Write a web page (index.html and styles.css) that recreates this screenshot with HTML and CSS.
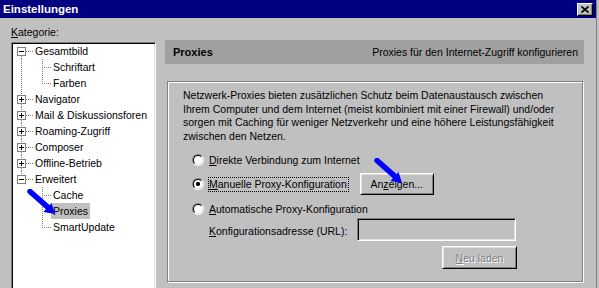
FILE: index.html
```html
<!DOCTYPE html>
<html lang="de">
<head>
  <meta charset="UTF-8">
  <title>Einstellungen</title>
  <link rel="stylesheet" href="styles.css">
</head>
<body>
  <div class="window">
    <div class="titlebar">
      <span class="title">Einstellungen</span>
      <span class="close">
        <svg width="8" height="7" viewBox="0 0 8 7"><path d="M0.5 0.5L7.5 6.5M7.5 0.5L0.5 6.5" stroke="#000" stroke-width="1.6"/></svg>
      </span>
    </div>

    <div class="content">
      <div class="left">
        <div class="cat-label"><u>K</u>ategorie:</div>
        <div class="tree">
          <div class="row"><span class="g g0 exp first"><span class="box"></span></span><span class="lbl">Gesamtbild</span></div>
          <div class="row"><span class="g g0 pipe"></span><span class="g g1 tee"></span><span class="lbl">Schriftart</span></div>
          <div class="row"><span class="g g0 pipe"></span><span class="g g1 elbow"></span><span class="lbl">Farben</span></div>
          <div class="row"><span class="g g0 exp"><span class="box plus"></span></span><span class="lbl">Navigator</span></div>
          <div class="row"><span class="g g0 exp"><span class="box plus"></span></span><span class="lbl">Mail &amp; Diskussionsforen</span></div>
          <div class="row"><span class="g g0 exp"><span class="box plus"></span></span><span class="lbl">Roaming-Zugriff</span></div>
          <div class="row"><span class="g g0 exp"><span class="box plus"></span></span><span class="lbl">Composer</span></div>
          <div class="row"><span class="g g0 exp"><span class="box plus"></span></span><span class="lbl">Offline-Betrieb</span></div>
          <div class="row"><span class="g g0 exp last"><span class="box"></span></span><span class="lbl">Erweitert</span></div>
          <div class="row"><span class="g g0"></span><span class="g g1 tee"></span><span class="lbl">Cache</span></div>
          <div class="row"><span class="g g0"></span><span class="g g1 tee"></span><span class="lbl selected">Proxies</span></div>
          <div class="row"><span class="g g0"></span><span class="g g1 elbow"></span><span class="lbl">SmartUpdate</span></div>
        </div>
      </div>

      <div class="right">
        <div class="header">
          <b>Proxies</b>
          <span>Proxies für den Internet-Zugriff konfigurieren</span>
        </div>

        <div class="group">
          <p class="desc">
            Netzwerk-Proxies bieten zusätzlichen Schutz beim Datenaustausch zwischen<br>
            Ihrem Computer und dem Internet (meist kombiniert mit einer Firewall) und/oder<br>
            sorgen mit Caching für weniger Netzverkehr und eine höhere Leistungsfähigkeit<br>
            zwischen den Netzen.
          </p>

          <div class="opt">
            <span class="radio"><span class="dot"></span></span>
            <span class="opt-label"><u>D</u>irekte Verbindung zum Internet</span>
          </div>
          <div class="opt opt-tall">
            <span class="radio checked"><span class="dot"></span></span>
            <span class="opt-label focus"><u>M</u>anuelle Proxy-Konfiguration</span>
            <span class="btn btn-show">An<u>z</u>eigen...</span>
          </div>
          <div class="opt">
            <span class="radio"><span class="dot"></span></span>
            <span class="opt-label"><u>A</u>utomatische Proxy-Konfiguration</span>
          </div>

          <div class="url-row">
            <span class="url-label"><u>K</u>onfigurationsadresse (URL):</span>
            <span class="field"></span>
          </div>
          <div class="reload-row">
            <span class="btn disabled"><u>N</u>eu laden</span>
          </div>
        </div>
      </div>
    </div>

    <svg class="arrow arrow-tree" width="30" height="26" viewBox="0 0 30 26">
      <line x1="3" y1="2.5" x2="21" y2="18.4" stroke="#0000ff" stroke-width="5.5" stroke-linecap="round"/>
      <polygon points="28,25 16.5,22.9 24.5,13.9" fill="#0000ff"/>
    </svg>
    <svg class="arrow arrow-btn" width="30" height="26" viewBox="0 0 30 26">
      <line x1="3" y1="2.5" x2="21" y2="18.4" stroke="#0000ff" stroke-width="5.5" stroke-linecap="round"/>
      <polygon points="28,25 16.5,22.9 24.5,13.9" fill="#0000ff"/>
    </svg>
  </div>
</body>
</html>
```

FILE: styles.css
```css
:root {
  --vd: repeating-linear-gradient(#808080 0 1px, transparent 1px 2px);
  --hd: repeating-linear-gradient(90deg, #808080 0 1px, transparent 1px 2px);
}
body {
  margin: 0;
  width: 599px;
  height: 288px;
  overflow: hidden;
  background-color: #c0c0c0;
  font-family: "Liberation Sans", Arial, sans-serif;
  font-size: 10.5px;
  color: #000;
}
.window {
  position: relative;
  width: 597px;
  height: 288px;
  border-right: 1px solid #808080;
  box-sizing: border-box;
}
.titlebar {
  height: 18px;
  background-color: #000080;
  display: flex;
  align-items: center;
  justify-content: space-between;
  padding: 0 3px 0 3px;
}
.title {
  color: #fff;
  font-weight: bold;
  font-size: 11.5px;
}
.close {
  width: 16px;
  height: 13px;
  box-sizing: border-box;
  background-color: #c0c0c0;
  border: 1px solid;
  border-color: #fff #000 #000 #fff;
  box-shadow: inset -1px -1px #808080;
  display: flex;
  align-items: center;
  justify-content: center;
  margin-top: 1px;
}

.content {
  display: flex;
  gap: 9px;
  padding: 8px 0 0 11px;
}
.left {
  width: 145px;
  flex: none;
}
.cat-label {
  line-height: 13px;
  height: 13px;
}
.tree {
  margin-top: 3px;
  height: 250px;
  box-sizing: border-box;
  background-color: #fff;
  border: 1px solid;
  border-color: #808080 #fff #fff #808080;
  box-shadow: inset 1px 1px #000, inset -1px -1px #dfdfdf;
  padding: 0 0 0 1px;
}
.row {
  display: flex;
  height: 16px;
  line-height: 16px;
  white-space: nowrap;
}
.g {
  flex: none;
  height: 16px;
  background-repeat: no-repeat;
}
.g0 { width: 20px; --lx: 8px; }
.g1 { width: 18px; --lx: 9px; }
.pipe {
  background-image: var(--vd);
  background-position: var(--lx) 0;
  background-size: 1px 16px;
}
.tee {
  background-image: var(--vd), var(--hd);
  background-position: var(--lx) 0, var(--lx) 8px;
  background-size: 1px 16px, 100% 1px;
}
.elbow {
  background-image: var(--vd), var(--hd);
  background-position: var(--lx) 0, var(--lx) 8px;
  background-size: 1px 9px, 100% 1px;
}
.exp {
  display: flex;
  align-items: center;
  padding-left: 4px;
  box-sizing: border-box;
  background-image: var(--vd), var(--vd), var(--hd);
  background-position: 8px 0, 8px 13px, 13px 8px;
  background-size: 1px 4px, 1px 3px, 7px 1px;
}
.exp.first {
  background-image: var(--vd), var(--hd);
  background-position: 8px 13px, 13px 8px;
  background-size: 1px 3px, 7px 1px;
}
.exp.last {
  background-image: var(--vd), var(--hd);
  background-position: 8px 0, 13px 8px;
  background-size: 1px 4px, 7px 1px;
}
.box {
  width: 9px;
  height: 9px;
  box-sizing: border-box;
  border: 1px solid #808080;
  background: linear-gradient(#000, #000) center / 5px 1px no-repeat, #fff;
}
.box.plus {
  background: linear-gradient(#000, #000) center / 5px 1px no-repeat,
              linear-gradient(#000, #000) center / 1px 5px no-repeat, #fff;
}
.lbl {
  padding: 0 2px;
}
.lbl.selected {
  background-color: #c0c0c0;
}

.right {
  width: 419px;
  flex: none;
  padding-top: 14px;
}
.header {
  height: 24px;
  background-color: #a0a0a0;
  display: flex;
  align-items: center;
  justify-content: space-between;
  padding: 0 6px 0 8px;
  font-size: 10.5px;
}
.header b {
  font-size: 11px;
}
.group {
  margin: 17px 0 0 2px;
  width: 416px;
  height: 201px;
  box-sizing: border-box;
  border: 1px solid #808080;
  box-shadow: inset 1px 1px #fff, 1px 1px #fff;
  padding: 7px 0 0 15px;
}
.desc {
  margin: 0;
  line-height: 13.5px;
  white-space: nowrap;
}
.opt {
  display: flex;
  align-items: center;
  height: 16px;
  margin-top: 9px;
  white-space: nowrap;
}
.opt-tall {
  height: 22px;
  margin-top: 5px;
}
.opt-tall + .opt {
  margin-top: 6px;
}
.radio {
  width: 12px;
  height: 12px;
  box-sizing: border-box;
  border-radius: 50%;
  border: 1px solid;
  border-color: #808080 #fff #fff #808080;
  margin-left: 9px;
  margin-right: 4px;
  flex: none;
  display: flex;
}
.dot {
  flex: 1;
  border-radius: 50%;
  border: 1px solid;
  border-color: #000 #dfdfdf #dfdfdf #000;
  background: #fff;
}
.radio.checked .dot {
  background: radial-gradient(circle, #000 0 2px, #fff 2.2px);
}
.opt-label {
  border: 1px dotted transparent;
  padding: 0 1px 0 0;
  line-height: 13px;
}
.opt-label.focus {
  border-color: #000;
}
.btn {
  display: flex;
  align-items: center;
  justify-content: center;
  box-sizing: border-box;
  border: 1px solid;
  border-color: #fff #000 #000 #fff;
  box-shadow: inset 1px 1px #dfdfdf, inset -1px -1px #808080;
  background-color: #c0c0c0;
}
.btn-show {
  width: 74px;
  height: 22px;
  margin-left: 11px;
}
.btn.disabled {
  width: 75px;
  height: 23px;
  color: #808080;
  text-shadow: 1px 1px #fff;
}
.url-row {
  display: flex;
  align-items: center;
  margin-top: 1px;
  padding-left: 26px;
  white-space: nowrap;
}
.url-label {
  width: 148px;
  padding-top: 2px;
}
.field {
  width: 159px;
  height: 23px;
  box-sizing: border-box;
  border: 1px solid;
  border-color: #808080 #fff #fff #808080;
  box-shadow: inset 1px 1px #000, inset -1px -1px #dfdfdf;
  background-color: #c0c0c0;
}
.reload-row {
  display: flex;
  margin: 5px 0 0 259px;
}

.arrow {
  position: absolute;
}
.arrow-tree {
  left: 27px;
  top: 189px;
}
.arrow-btn {
  left: 374px;
  top: 158px;
}
```
